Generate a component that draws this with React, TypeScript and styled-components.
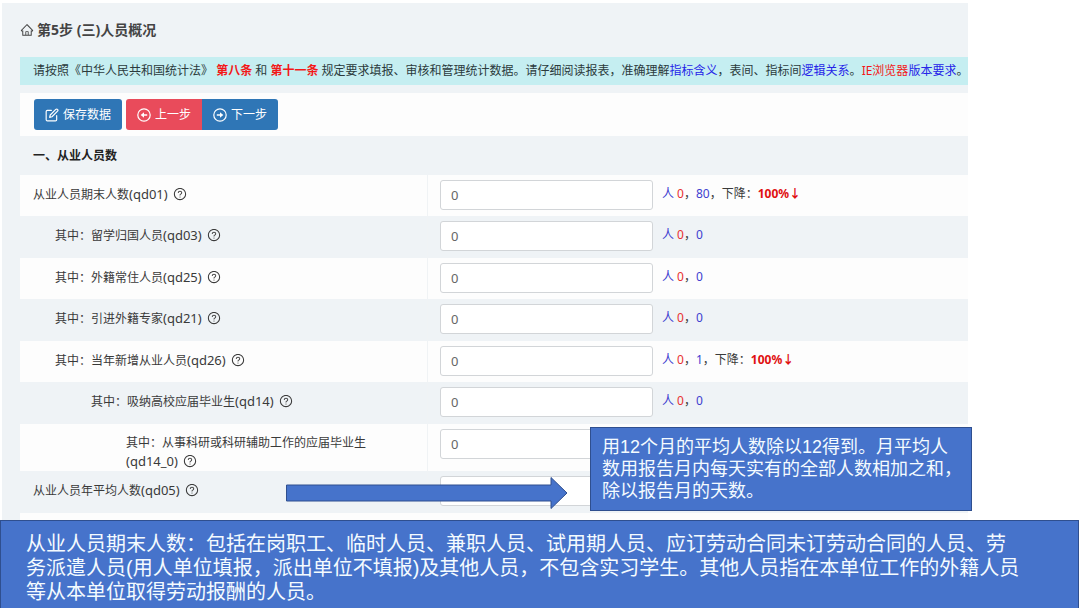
import React from 'react';
import styled, { createGlobalStyle } from 'styled-components';
import { AiOutlineHome, AiOutlineQuestionCircle } from 'react-icons/ai';
import { FiEdit } from 'react-icons/fi';

const GlobalStyle = createGlobalStyle`
  *, *::before, *::after { box-sizing: border-box; }
  body {
    margin: 0;
    background: #fff;
    color: #3a3a3a;
    font-family: "Noto Sans", "Noto Sans CJK SC", sans-serif;
    font-size: 12px;
    line-height: 18px;
  }
`;

const Page = styled.div`
  position: relative;
  padding-top: 3px;
`;

const Panel = styled.main`
  width: 89.4%;
  margin-left: 2px;
  padding-left: 18px;
  background: #eff3f6;
`;

const Title = styled.h1`
  display: flex;
  align-items: center;
  gap: 3px;
  height: 54px;
  margin: 0;
  color: #444;
  font-size: 14px;
  font-weight: 700;
`;

const Notice = styled.p`
  margin: 0 0 8px;
  padding: 5px 13px;
  background: #c5eef1;
  color: #2b3a3c;
  white-space: nowrap;
`;

const NoticeLink = styled.a<{ $tone: 'red' | 'blue'; $strong?: boolean }>`
  color: ${(p) => (p.$tone === 'red' ? '#f31818' : '#2525e8')};
  font-weight: ${(p) => (p.$strong ? 700 : 400)};
  text-decoration: none;
`;

const Toolbar = styled.div`
  display: flex;
  padding: 6px 14px;
  background: #fdfdfd;
`;

const Button = styled.button<{ $tone: 'red' | 'blue'; $side?: 'left' | 'right' }>`
  display: flex;
  align-items: center;
  gap: 4px;
  height: 31px;
  padding: 0 11px;
  border: 0;
  border-radius: ${(p) =>
    p.$side === 'left' ? '3px 0 0 3px' : p.$side === 'right' ? '0 3px 3px 0' : '3px'};
  margin-left: ${(p) => (p.$side === 'left' ? '4px' : '0')};
  background: ${(p) => (p.$tone === 'red' ? '#e94b5b' : '#2f76b6')};
  color: #fff;
  font: inherit;
`;

const SectionTitle = styled.h2`
  margin: 0;
  padding: 11px 13px 10px;
  color: #222;
  font-size: 12px;
  font-weight: 700;
  line-height: 18px;
`;

const Table = styled.table`
  width: 100%;
  border-collapse: collapse;
  table-layout: fixed;
`;

const Row = styled.tr`
  height: 42px;
  &:nth-child(odd) {
    height: 41px;
    background: #fdfdfd;
  }
`;

const indents = [13, 35, 71, 106];

const LabelCell = styled.th<{ $level: number }>`
  width: 43%;
  padding: 10px 20px 0 ${(p) => indents[p.$level]}px;
  border-right: 1px solid #f0f3f5;
  font-weight: 400;
  text-align: left;
  vertical-align: top;
`;

const Code = styled.span`
  display: inline-flex;
  align-items: center;
  gap: 5px;
  height: 18px;
  font-size: 13px;
`;

const ValueCell = styled.td`
  padding: 5px 12px 0;
  vertical-align: top;
`;

const Field = styled.div`
  display: flex;
  gap: 9px;
`;

const NumberInput = styled.input`
  width: 213px;
  height: 30px;
  padding: 0 10px;
  border: 1px solid #d2d5d8;
  border-radius: 3px;
  background: #fff;
  color: #666;
  font: inherit;
  font-size: 13px;
`;

const Compare = styled.span`
  padding-top: 5px;
  white-space: pre;
`;

const Num = styled.span<{ $tone: 'red' | 'blue' }>`
  color: ${(p) => (p.$tone === 'red' ? '#e83030' : '#4040d0')};
`;

const Drop = styled.strong`
  color: #e01010;
`;

const Spacer = styled.div`
  height: 7px;
  background: #fdfdfd;
`;

const note = `
  border: 1px solid #2f4f8f;
  background: #4673cb;
  color: #f4fbff;
  font-family: "Liberation Sans", "Noto Sans CJK SC", sans-serif;
  white-space: nowrap;
`;

const Callout = styled.aside`
  ${note}
  position: absolute;
  top: 427px;
  left: 590px;
  width: 382px;
  padding: 8px 0 8px 11px;
  font-size: 18px;
  line-height: 22px;
`;

const Arrow = styled.svg`
  position: absolute;
  top: 476px;
  left: 286px;
`;

const BottomNote = styled.footer`
  ${note}
  margin-right: 1px;
  padding: 11px 25px 4px;
  font-size: 20px;
  line-height: 24px;
`;

function CircleArrow({ flip }: { flip?: boolean }) {
  return (
    <svg width="14" height="14" viewBox="0 0 14 14" fill="none" stroke="currentColor" aria-hidden="true">
      <circle cx="7" cy="7" r="6.200" strokeWidth="1.200" />
      <g transform={flip ? 'rotate(180 7 7)' : undefined}>
        <path d="M3.800 7H7.500" strokeWidth="1.500" />
        <path d="M7 4.300 10.300 7 7 9.700Z" fill="currentColor" stroke="none" />
      </g>
    </svg>
  );
}

type Item = { label: string; code: string; level: number; prev?: string; drop?: boolean; value: string };

const items: Item[] = [
  { label: '从业人员期末人数', code: 'qd01', level: 0, prev: '80', drop: true, value: '0' },
  { label: '其中：留学归国人员', code: 'qd03', level: 1, prev: '0', value: '0' },
  { label: '其中：外籍常住人员', code: 'qd25', level: 1, prev: '0', value: '0' },
  { label: '其中：引进外籍专家', code: 'qd21', level: 1, prev: '0', value: '0' },
  { label: '其中：当年新增从业人员', code: 'qd26', level: 1, prev: '1', drop: true, value: '0' },
  { label: '其中：吸纳高校应届毕业生', code: 'qd14', level: 2, prev: '0', value: '0' },
  { label: '其中：从事科研或科研辅助工作的应届毕业生', code: 'qd14_0', level: 3, value: '0' },
  { label: '从业人员年平均人数', code: 'qd05', level: 0, value: '' },
];

export default function App() {
  return (
    <Page>
      <GlobalStyle />
      <Panel>
        <Title>
          <AiOutlineHome size={14} />
          第5步 (三)人员概况
        </Title>
        <Notice>
          请按照《中华人民共和国统计法》{' '}
          <NoticeLink href="#law8" $tone="red" $strong>第八条</NoticeLink> 和{' '}
          <NoticeLink href="#law11" $tone="red" $strong>第十一条</NoticeLink>{' '}
          规定要求填报、审核和管理统计数据。请仔细阅读报表，准确理解
          <NoticeLink href="#meaning" $tone="blue">指标含义</NoticeLink>，表间、指标间
          <NoticeLink href="#logic" $tone="blue">逻辑关系</NoticeLink>。
          <NoticeLink href="#ie" $tone="red">IE浏览器</NoticeLink>
          <NoticeLink href="#version" $tone="blue">版本要求</NoticeLink>。
        </Notice>
        <Toolbar>
          <Button type="button" $tone="blue"><FiEdit size={14} />保存数据</Button>
          <Button type="button" $tone="red" $side="left"><CircleArrow flip />上一步</Button>
          <Button type="button" $tone="blue" $side="right"><CircleArrow />下一步</Button>
        </Toolbar>
        <SectionTitle>一、从业人员数</SectionTitle>
        <Table>
          <tbody>
            {items.map((it) => (
              <Row key={it.code}>
                <LabelCell scope="row" $level={it.level}>
                  <label htmlFor={it.code}>
                    {it.label}
                    <Code>({it.code})<AiOutlineQuestionCircle size={14} /></Code>
                  </label>
                </LabelCell>
                <ValueCell>
                  <Field>
                    <NumberInput id={it.code} defaultValue={it.value} />
                    {it.prev && (
                      <Compare>
                        <Num $tone="blue">人 </Num>
                        <Num $tone="red">0</Num>，<Num $tone="blue">{it.prev}</Num>
                        {it.drop && <>，下降：<Drop>100%↓</Drop></>}
                      </Compare>
                    )}
                  </Field>
                </ValueCell>
              </Row>
            ))}
          </tbody>
        </Table>
        <Spacer />
      </Panel>
      <Arrow width="282" height="34" viewBox="0 0 282 34" aria-hidden="true">
        <path d="M.5 9H265V1.500L281 17 265 32.500V25H.5Z" fill="#4673cb" stroke="#2f4f8f" />
      </Arrow>
      <Callout>
        用12个月的平均人数除以12得到。月平均人<br />
        数用报告月内每天实有的全部人数相加之和，<br />
        除以报告月的天数。
      </Callout>
      <BottomNote>
        从业人员期末人数：包括在岗职工、临时人员、兼职人员、试用期人员、应订劳动合同未订劳动合同的人员、劳<br />
        务派遣人员(用人单位填报，派出单位不填报)及其他人员，不包含实习学生。其他人员指在本单位工作的外籍人员<br />
        等从本单位取得劳动报酬的人员。
      </BottomNote>
    </Page>
  );
}
